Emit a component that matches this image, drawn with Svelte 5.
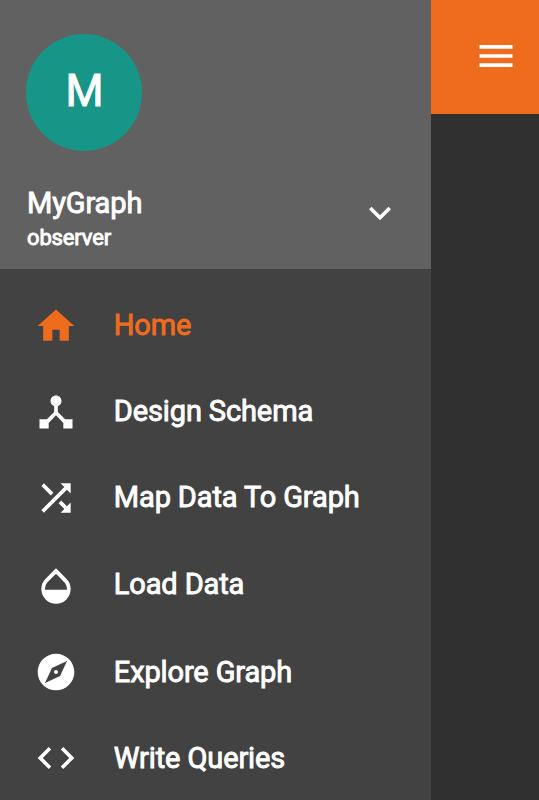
<script>
  const items = [
    { label: 'Home', active: true, path: 'M10 20v-6h4v6h5v-8h3L12 3 2 12h3v8z' },
    { label: 'Design Schema', path: 'M17 16l-4-4V8.82C14.16 8.4 15 7.3 15 6c0-1.66-1.34-3-3-3S9 4.34 9 6c0 1.3.84 2.4 2 2.82V12l-4 4H3v5h5v-3.05l4-4.2 4 4.2V21h5v-5h-4z' },
    { label: 'Map Data To Graph', path: 'M10.59 9.17L5.41 4 4 5.41l5.17 5.17 1.42-1.41zM14.5 4l2.04 2.04L4 18.59 5.41 20 17.96 7.46 20 9.5V4h-5.5zm.33 9.41l-1.41 1.41 3.13 3.13L14.5 20H20v-5.5l-2.04 2.04-3.13-3.13z' },
    { label: 'Load Data', path: 'M17.66 8L12 2.35 6.34 8C4.78 9.56 4 11.64 4 13.64s.78 4.11 2.34 5.67 3.61 2.35 5.66 2.35 4.1-.79 5.66-2.35S20 15.64 20 13.64 19.22 9.56 17.66 8zM6 14c.01-2 .62-3.27 1.76-4.4L12 5.27l4.24 4.38C17.38 10.77 17.99 12 18 14H6z' },
    { label: 'Explore Graph', path: 'M12 10.9c-.61 0-1.1.49-1.1 1.1s.49 1.1 1.1 1.1c.61 0 1.1-.49 1.1-1.1s-.49-1.1-1.1-1.1zM12 2C6.48 2 2 6.48 2 12s4.48 10 10 10 10-4.48 10-10S17.52 2 12 2zm2.19 12.19L6 18l3.81-8.19L18 6l-3.81 8.19z' },
    { label: 'Write Queries', path: 'M9.4 16.6L4.8 12l4.6-4.6L8 6l-6 6 6 6 1.4-1.4zm5.2 0l4.6-4.6-4.6-4.6L16 6l6 6-6 6-1.4-1.4z' }
  ];
</script>

<div class="app">
  <aside class="drawer">
    <header class="profile">
      <div class="avatar">M</div>
      <div class="account">
        <div class="who">
          <div class="name">MyGraph</div>
          <div class="role">observer</div>
        </div>
        <svg class="chevron" viewBox="0 0 24 24"><path d="M16.59 8.59L12 13.17 7.41 8.59 6 10l6 6 6-6z" /></svg>
      </div>
    </header>
    <nav>
      {#each items as item}
        <div class="item" class:active={item.active}>
          <svg viewBox="0 0 24 24"><path d={item.path} /></svg>
          <span>{item.label}</span>
        </div>
      {/each}
    </nav>
  </aside>
  <main>
    <div class="toolbar">
      <svg viewBox="0 0 24 24"><path d="M3 18h18v-2H3v2zm0-5h18v-2H3v2zm0-7v2h18V6H3z" /></svg>
    </div>
  </main>
</div>

<style>
  :global(body) { margin: 0; }
  .app {
    display: flex;
    width: 539px;
    height: 800px;
    overflow: hidden;
    background: #303030;
    color: #fff;
    font-family: Roboto, "Liberation Sans", sans-serif;
    font-weight: 400;
    -webkit-text-stroke: 0.9px currentColor;
  }
  svg {
    width: 44px;
    height: 44px;
    flex: none;
    fill: currentColor;
    display: block;
  }
  .drawer {
    width: 431px;
    flex: none;
    background: #424242;
  }
  .profile {
    box-sizing: border-box;
    height: 268.5px;
    padding: 34px 29px 0 26px;
    background: #616161;
  }
  .avatar {
    width: 116px;
    height: 116.5px;
    border-radius: 50%;
    background: #179587;
    font-size: 43.5px;
    line-height: 115px;
    text-align: center;
    text-indent: 1px;
    -webkit-text-stroke-width: 1px;
  }
  .account {
    display: flex;
    justify-content: space-between;
    padding: 34px 0 0 1px;
  }
  .name {
    font-size: 29px;
    line-height: 36px;
    letter-spacing: -0.12px;
  }
  .role {
    font-size: 22px;
    line-height: 33px;
    letter-spacing: -0.15px;
  }
  .chevron { margin-top: 6px; }
  nav { padding-top: 13.5px; }
  .item {
    display: flex;
    align-items: center;
    gap: 36.2px;
    height: 86.5px;
    padding-left: 33.6px;
    font-size: 29px;
    letter-spacing: -0.12px;
    white-space: nowrap;
  }
  .item span { padding-bottom: 1px; }
  .item:nth-child(3) span { padding-bottom: 2px; }
  .item:nth-child(n + 5) span { padding: 1px 0 0; }
  .item:nth-child(1) svg,
  .item:nth-child(4) svg,
  .item:nth-child(5) svg { margin-top: 1.5px; }
  .active { color: #ef6c1f; }
  main { flex: 1; }
  .toolbar {
    box-sizing: border-box;
    height: 114px;
    padding: 34px 0 0 43px;
    background: #ef6c1f;
  }
</style>
